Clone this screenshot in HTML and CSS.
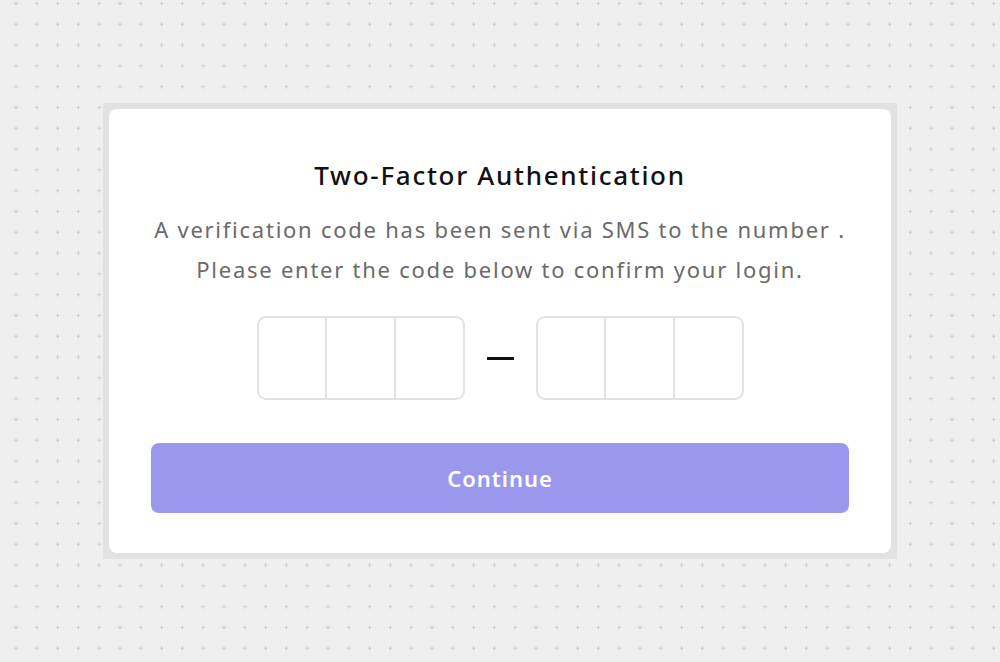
FILE: index.html
```html
<!DOCTYPE html>
<html lang="en">
<head>
<meta charset="utf-8">
<title>Two-Factor Authentication</title>
<link rel="stylesheet" href="styles.css">
</head>
<body>
<div class="page">
  <svg class="grid" width="1000" height="662" aria-hidden="true">
    <defs>
      <pattern id="plus" patternUnits="userSpaceOnUse" x="5.6" y="-6.9" width="20.8" height="20.8">
        <rect x="8.4" y="9.9" width="4" height="1" fill="#cfcfcf"/>
        <rect x="9.9" y="8.4" width="1" height="4" fill="#cfcfcf"/>
      </pattern>
    </defs>
    <rect width="1000" height="662" fill="url(#plus)"/>
  </svg>
  <div class="frame">
    <div class="card">
      <h1 class="title">Two-Factor Authentication</h1>
      <p class="desc">A verification code has been sent via SMS to the number .<br>Please enter the code below to confirm your login.</p>
      <div class="code">
        <div class="group">
          <div class="cell"></div>
          <div class="cell"></div>
          <div class="cell"></div>
        </div>
        <div class="dash"></div>
        <div class="group">
          <div class="cell"></div>
          <div class="cell"></div>
          <div class="cell"></div>
        </div>
      </div>
      <button class="btn" type="button">Continue</button>
    </div>
  </div>
</div>
</body>
</html>
```

FILE: styles.css
```css
* { box-sizing: border-box; }
html, body { margin: 0; padding: 0; }
body {
  width: 1000px;
  height: 662px;
  overflow: hidden;
  font-family: "Noto Sans", "Open Sans", sans-serif;
  background: #efefef;
}
.page {
  position: relative;
  width: 1000px;
  height: 662px;
  padding: 103px 103px 0 103px;
}
.grid {
  position: absolute;
  left: 0;
  top: 0;
  z-index: 0;
}
.frame {
  position: relative;
  z-index: 1;
  width: 794px;
  height: 456px;
  background: #e2e2e2;
  padding: 6px;
}
.card {
  background: #ffffff;
  border-radius: 8px;
  height: 100%;
  padding: 44px 42px 0;
  display: flex;
  flex-direction: column;
  align-items: center;
}
.title {
  margin: 0;
  font-size: 26px;
  font-weight: 500;
  letter-spacing: 1.7px;
  line-height: 44px;
  color: #111111;
}
.desc {
  margin: 12px 0 0;
  font-size: 22px;
  letter-spacing: 1.75px;
  line-height: 40px;
  color: #6a6a6a;
  text-align: center;
}
.code {
  margin-top: 27px;
  display: flex;
  align-items: center;
  gap: 22px;
}
.group {
  display: flex;
  width: 208px;
  height: 84px;
  border: 2px solid #e2e2e2;
  border-radius: 9px;
}
.cell {
  flex: 1;
}
.cell + .cell {
  border-left: 2px solid #e2e2e2;
}
.dash {
  width: 27px;
  height: 3px;
  background: #111111;
}
.btn {
  margin-top: 43px;
  width: 100%;
  height: 70px;
  border: none;
  border-radius: 8px;
  background: #9a98ed;
  color: #ffffff;
  font-family: "Noto Sans", "Open Sans", sans-serif;
  font-size: 22px;
  font-weight: 600;
  letter-spacing: 1px;
}
```
